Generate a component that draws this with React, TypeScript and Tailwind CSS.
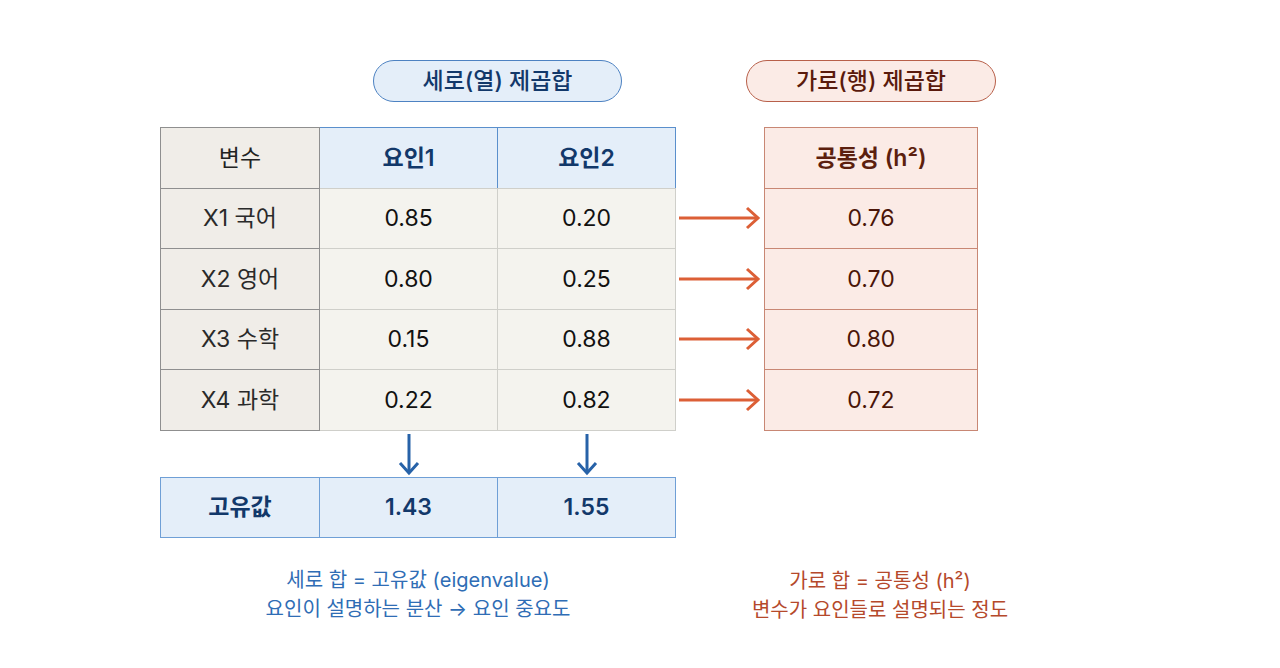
import React from "react";

const FONT = { fontFamily: 'Inter, "Noto Sans CJK KR", sans-serif' };

const rows = [
  { name: "X1 국어", a: "0.85", b: "0.20", h: "0.76" },
  { name: "X2 영어", a: "0.80", b: "0.25", h: "0.70" },
  { name: "X3 수학", a: "0.15", b: "0.88", h: "0.80" },
  { name: "X4 과학", a: "0.22", b: "0.82", h: "0.72" },
];

function RightArrow() {
  return (
    <div className="h-[61.5px] -mt-px flex items-center justify-center">
      <svg width="88" height="30" viewBox="0 0 88 30">
        <line x1="3" y1="15" x2="81" y2="15" stroke="#dc5f36" strokeWidth="3" />
        <polyline points="71,5 82,15 71,25" fill="none" stroke="#dc5f36" strokeWidth="3" />
      </svg>
    </div>
  );
}

function DownArrow() {
  return (
    <div className="w-[179px] -ml-px flex justify-center">
      <svg width="30" height="46" viewBox="0 0 30 46">
        <line x1="15" y1="3" x2="15" y2="41" stroke="#2762a8" strokeWidth="3" />
        <polyline points="6,32 15,42 24,32" fill="none" stroke="#2762a8" strokeWidth="3" />
      </svg>
    </div>
  );
}

export default function App() {
  return (
    <div className="w-[1280px] h-[668px] bg-white relative overflow-hidden" style={FONT}>
      {/* pills */}
      <div className="flex pt-[60px]">
        <div className="ml-[373px] w-[249px] h-[42px] rounded-full border border-[#4d82c2] bg-[#e4eef9] flex items-center justify-center text-[23px] font-medium text-[#12386a]">
          세로(열) 제곱합
        </div>
        <div className="ml-[124px] w-[250px] h-[42px] rounded-full border border-[#b8604a] bg-[#fbebe6] flex items-center justify-center text-[23px] font-medium text-[#5a1a0c]">
          가로(행) 제곱합
        </div>
      </div>

      {/* table area */}
      <div className="flex mt-[25px] ml-[160px]">
        {/* main table */}
        <div className="flex flex-col w-[516px]">
          <div className="flex h-[61.5px]">
            <div className="relative z-10 w-[160px] border border-[#8f8f8f] bg-[#f0ede8] flex items-center justify-center text-[23px] text-[#222]">
              변수
            </div>
            <div className="w-[179px] -ml-px border border-[#5a8fcc] bg-[#e4eef9] flex items-center justify-center text-[23px] font-semibold text-[#12386a]">
              요인1
            </div>
            <div className="w-[179px] -ml-px border border-[#5a8fcc] bg-[#e4eef9] flex items-center justify-center text-[23px] font-semibold text-[#12386a]">
              요인2
            </div>
          </div>
          {rows.map((r) => (
            <div key={r.name} className="flex h-[61.5px] -mt-px">
              <div className="relative z-10 w-[160px] border border-[#8f8f8f] bg-[#f0ede8] flex items-center justify-center text-[23px] text-[#2a2a2a]">
                {r.name}
              </div>
              <div className="w-[179px] -ml-px border border-[#cfcfca] bg-[#f4f3ee] flex items-center justify-center text-[23px] text-[#111]">
                {r.a}
              </div>
              <div className="w-[179px] -ml-px border border-[#cfcfca] bg-[#f4f3ee] flex items-center justify-center text-[23px] text-[#111]">
                {r.b}
              </div>
            </div>
          ))}
          {/* down arrows */}
          <div className="flex h-[46px]">
            <div className="w-[160px]" />
            <DownArrow />
            <DownArrow />
          </div>
          {/* eigen row */}
          <div className="flex h-[61.5px]">
            <div className="w-[160px] border border-[#6f9fd6] bg-[#e4eef9] flex items-center justify-center text-[23px] font-semibold text-[#12386a]">
              고유값
            </div>
            <div className="w-[179px] -ml-px border border-[#6f9fd6] bg-[#e4eef9] flex items-center justify-center text-[23px] font-semibold text-[#12386a]">
              1.43
            </div>
            <div className="w-[179px] -ml-px border border-[#6f9fd6] bg-[#e4eef9] flex items-center justify-center text-[23px] font-semibold text-[#12386a]">
              1.55
            </div>
          </div>
          {/* left caption */}
          <div className="mt-[28px] flex flex-col items-center text-[20px] leading-[29px] text-[#2f6db5] whitespace-nowrap">
            <div>세로 합 = 고유값 (eigenvalue)</div>
            <div>요인이 설명하는 분산 → 요인 중요도</div>
          </div>
        </div>

        {/* arrows column */}
        <div className="flex flex-col w-[88px]">
          <div className="h-[61.5px]" />
          {rows.map((r) => (
            <RightArrow key={r.name} />
          ))}
        </div>

        {/* right table */}
        <div className="flex flex-col w-[214px]">
          <div className="h-[61.5px] border border-[#c88774] bg-[#fbebe6] flex items-center justify-center text-[23px] font-semibold text-[#5c1f0e]">
            공통성 (h²)
          </div>
          {rows.map((r) => (
            <div
              key={r.name}
              className="h-[61.5px] -mt-px border border-[#c88774] bg-[#fbebe6] flex items-center justify-center text-[23px] text-[#4a1508]"
            >
              {r.h}
            </div>
          ))}
          <div className="mt-[136px] -ml-[4px] w-[240px] flex flex-col items-center text-[20px] leading-[29px] text-[#b5492b] whitespace-nowrap">
            <div>가로 합 = 공통성 (h²)</div>
            <div>변수가 요인들로 설명되는 정도</div>
          </div>
        </div>
      </div>
    </div>
  );
}
